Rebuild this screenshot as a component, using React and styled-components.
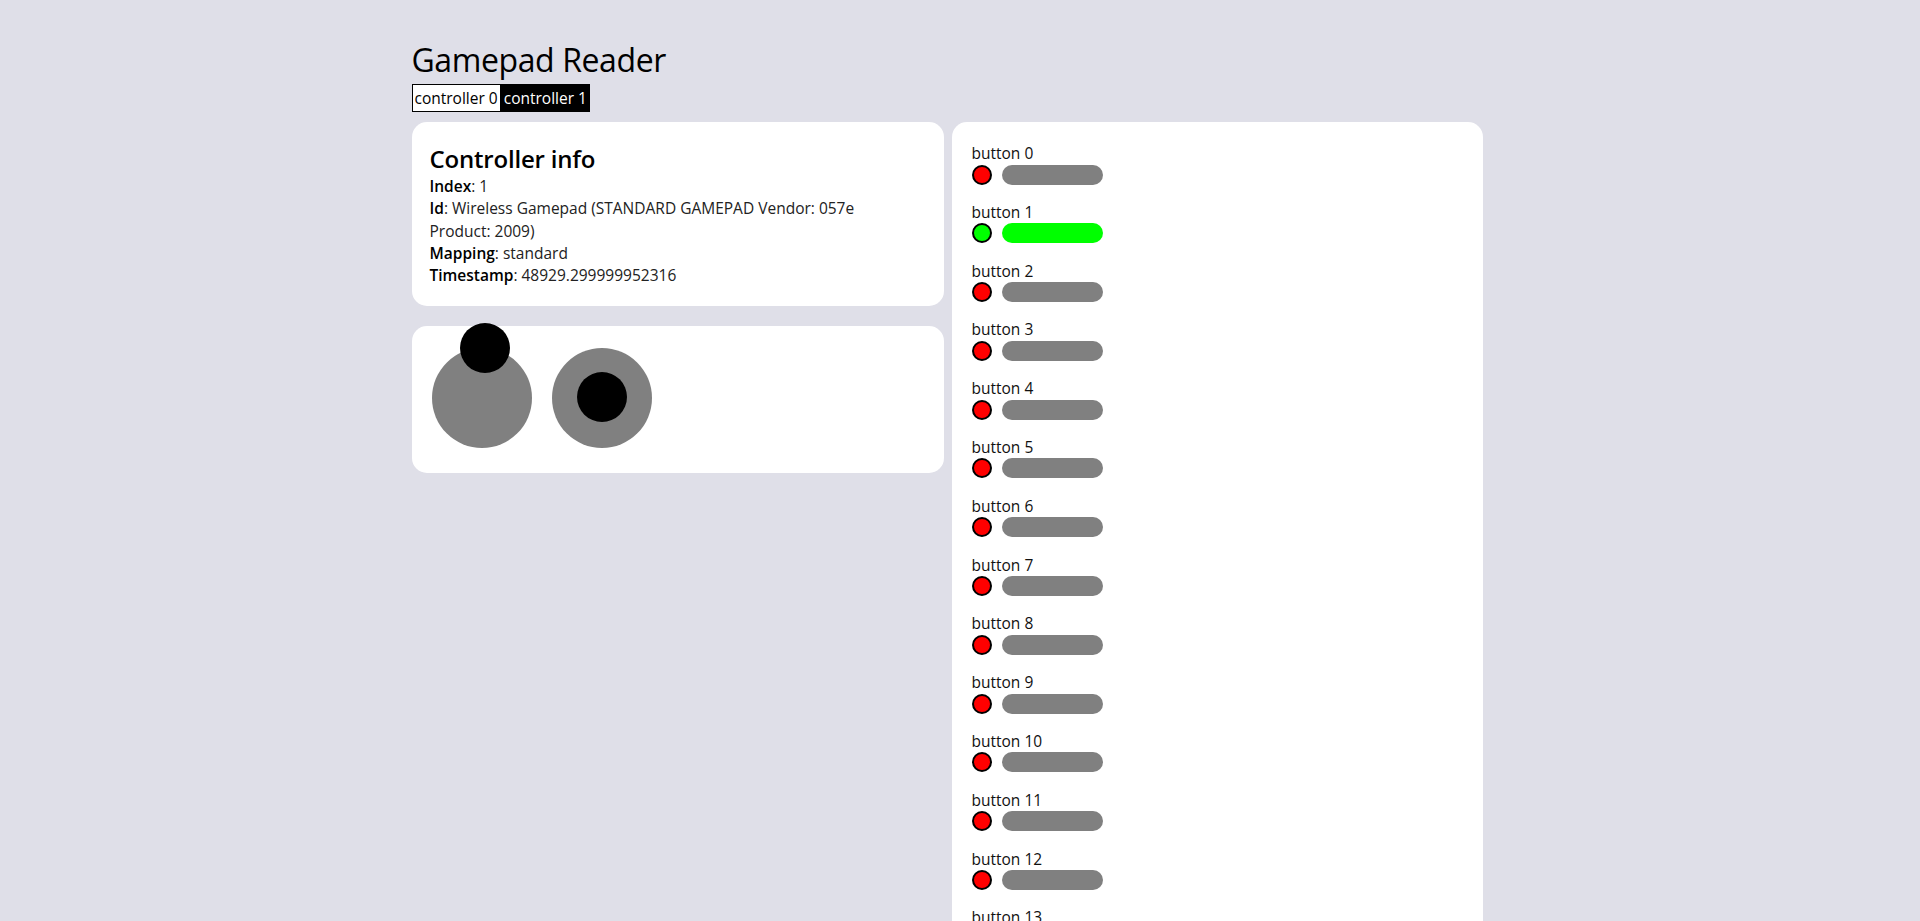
import React from "react";
import styled, { createGlobalStyle } from "styled-components";

const GlobalStyle = createGlobalStyle`
  body {
    margin: 0;
    background: #dfdfe8;
    color: #000;
    font-family: "Open Sans", "Noto Sans", sans-serif;
    font-size: 16px;
  }
`;

/* the reference was taken with a 17px scrollbar, so the centred block sits a bit left */
const Page = styled.div`
  width: 1080px;
  margin: 0 auto;
  padding: 38px 17px 40px 0;
`;

const Title = styled.h1`
  margin: 0;
  font-size: 32px;
  line-height: 44px;
  font-weight: 400;
  letter-spacing: -0.4px;
`;

const Tabs = styled.div`
  display: flex;
  margin: 2px 0 10px;
`;

const Tab = styled.button`
  font-family: inherit;
  font-size: 15.5px;
  line-height: 22px;
  padding: 2px 2px;
  border: 1px solid #000;
  border-radius: 0;
  cursor: pointer;
  background: ${(p) => (p.active ? "#000" : "#fff")};
  color: ${(p) => (p.active ? "#fff" : "#000")};
`;

const Columns = styled.div`
  display: grid;
  grid-template-columns: 532px 531px;
  column-gap: 8px;
  align-items: start;
`;

const LeftColumn = styled.div`
  display: flex;
  flex-direction: column;
  gap: 20px;
`;

const Panel = styled.section`
  background: #fff;
  border-radius: 15px;
  padding: ${(p) => p.pad || "20px 18px"};
`;

const PanelTitle = styled.h2`
  margin: 0;
  font-size: 24px;
  line-height: 33px;
  font-weight: 600;
  letter-spacing: -0.2px;
`;

const InfoLine = styled.div`
  font-size: 15.5px;
  line-height: 22.3px;
  color: #222;

  b {
    color: #000;
    font-weight: 600;
  }
`;

const Sticks = styled.div`
  display: flex;
  gap: 20px;
`;

const StickBase = styled.div`
  position: relative;
  width: 100px;
  height: 100px;
  border-radius: 50%;
  background: #808080;
`;

const Knob = styled.div`
  position: absolute;
  width: 50px;
  height: 50px;
  margin: -25px 0 0 -25px;
  border-radius: 50%;
  background: #000;
`;

const ButtonItem = styled.div`
  margin-bottom: 15.8px;

  &:last-child {
    margin-bottom: 0;
  }
`;

const ButtonLabel = styled.div`
  font-size: 15.5px;
  line-height: 22px;
  color: #111;
`;

const ButtonRow = styled.div`
  display: flex;
  align-items: center;
  gap: 10px;
  height: 21px;
`;

const Led = styled.div`
  box-sizing: border-box;
  width: 20px;
  height: 20px;
  border-radius: 50%;
  border: 2px solid #000;
  background: ${(p) => (p.pressed ? "#00ff00" : "#ff0000")};
`;

const Track = styled.div`
  width: 101px;
  height: 20px;
  border-radius: 10px;
  background: #808080;
  overflow: hidden;
`;

const Fill = styled.div`
  height: 100%;
  background: #00ff00;
`;

const sticks = [
  { x: 0.06, y: -1 },
  { x: 0, y: -0.02 },
];

const buttons = Array.from({ length: 17 }, (_, i) => ({
  index: i,
  pressed: i === 1,
  value: i === 1 ? 1 : 0,
}));

function Stick({ x, y }) {
  return (
    <StickBase>
      <Knob style={{ left: `${50 + x * 50}px`, top: `${50 + y * 50}px` }} />
    </StickBase>
  );
}

export default function App() {
  return (
    <>
      <GlobalStyle />
      <Page>
        <Title>Gamepad Reader</Title>
        <Tabs>
          <Tab>controller 0</Tab>
          <Tab active>controller 1</Tab>
        </Tabs>
        <Columns>
          <LeftColumn>
            <Panel>
              <PanelTitle>Controller info</PanelTitle>
              <InfoLine>
                <b>Index</b>: 1
              </InfoLine>
              <InfoLine>
                <b>Id</b>: Wireless Gamepad (STANDARD GAMEPAD Vendor: 057e
                <br />
                Product: 2009)
              </InfoLine>
              <InfoLine>
                <b>Mapping</b>: standard
              </InfoLine>
              <InfoLine>
                <b>Timestamp</b>: 48929.299999952316
              </InfoLine>
            </Panel>
            <Panel pad="22px 20px 25px">
              <Sticks>
                {sticks.map((s, i) => (
                  <Stick key={i} x={s.x} y={s.y} />
                ))}
              </Sticks>
            </Panel>
          </LeftColumn>
          <Panel pad="20px 18px 20px 20px">
            {buttons.map((b) => (
              <ButtonItem key={b.index}>
                <ButtonLabel>button {b.index}</ButtonLabel>
                <ButtonRow>
                  <Led pressed={b.pressed} />
                  <Track>
                    <Fill style={{ width: `${b.value * 100}%` }} />
                  </Track>
                </ButtonRow>
              </ButtonItem>
            ))}
          </Panel>
        </Columns>
      </Page>
    </>
  );
}
